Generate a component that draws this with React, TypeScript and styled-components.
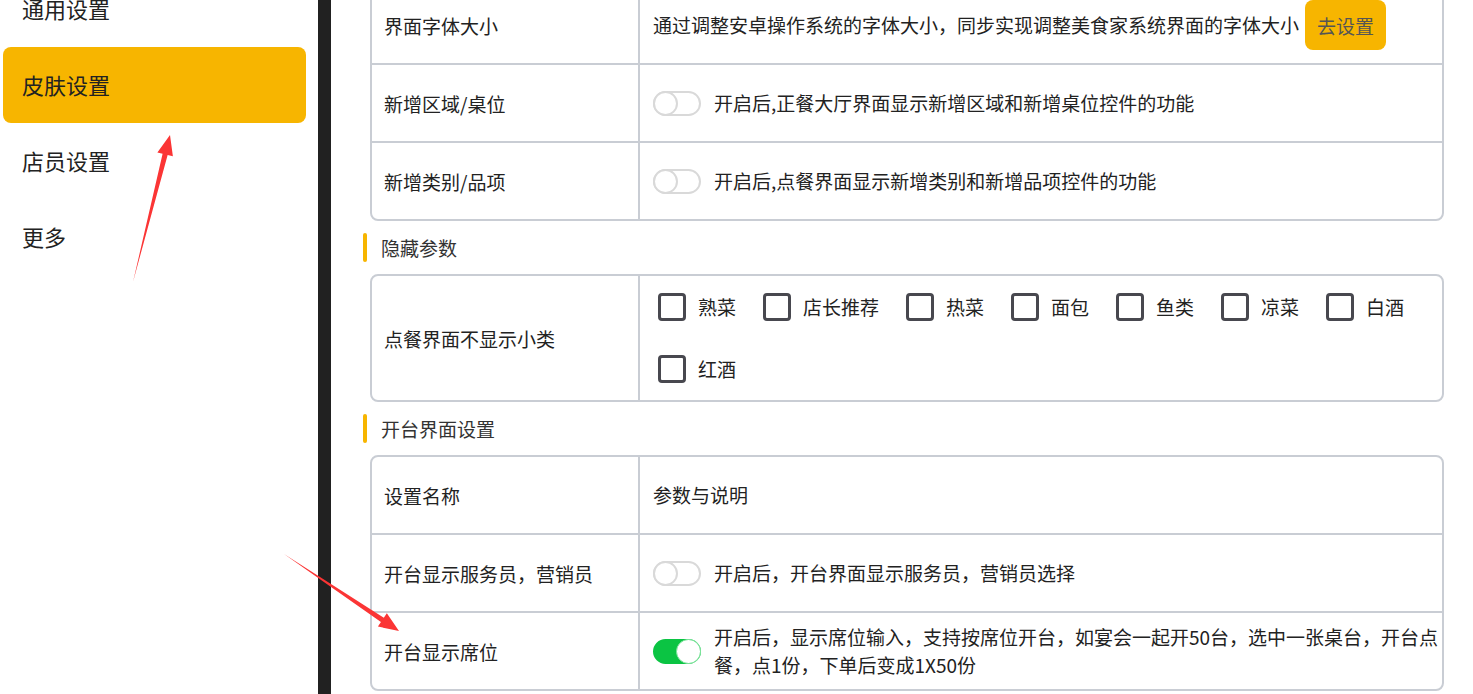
import React from 'react';
import styled, { createGlobalStyle } from 'styled-components';

const GlobalStyle = createGlobalStyle`
  html, body {
    margin: 0;
    padding: 0;
    height: 100%;
    overflow: hidden;
    background: #ffffff;
  }
  body {
    font-family: "Noto Sans CJK SC", "Noto Sans", sans-serif;
    color: #222222;
  }
`;

const Page = styled.div`
  display: flex;
  height: 100vh;
  overflow: hidden;
  background: #ffffff;
`;

const Sidebar = styled.nav`
  width: 318px;
  flex-shrink: 0;
  box-sizing: border-box;
  padding: 0 12px 0 3px;
  margin-top: -29px;
  display: flex;
  flex-direction: column;
`;

const NavItem = styled.div<{ active?: boolean }>`
  height: 76px;
  display: flex;
  align-items: center;
  padding: 0 0 3px 19px;
  box-sizing: border-box;
  font-size: 22px;
  color: #222222;
  border-radius: 8px;
  background: ${p => (p.active ? '#f7b500' : 'transparent')};
`;

const Divider = styled.div`
  width: 13px;
  flex-shrink: 0;
  background: #212121;
`;

const Content = styled.main`
  flex: 1;
  box-sizing: border-box;
  padding: 0 29px 0 32px;
  margin-top: -15px;
  display: flex;
  flex-direction: column;
`;

const Card = styled.div`
  margin-left: 7px;
  border: 2px solid #c9cdd4;
  border-radius: 8px;
  overflow: hidden;
`;

const Row = styled.div`
  display: grid;
  grid-template-columns: 266px 1fr;
  min-height: 76px;
  & + & {
    border-top: 2px solid #c9cdd4;
  }
`;

const NameCell = styled.div`
  display: flex;
  align-items: center;
  padding-left: 12px;
  font-size: 19px;
  color: #222222;
`;

const ValueCell = styled.div`
  display: flex;
  align-items: center;
  gap: 13px;
  padding: 0 0 0 13px;
  border-left: 2px solid #c9cdd4;
  font-size: 19px;
  color: #222222;
  line-height: 28px;
`;

const GoButton = styled.button`
  height: 50px;
  padding: 0 12px;
  margin-left: -7px;
  border: none;
  border-radius: 8px;
  background: #f7b500;
  color: #555555;
  font-family: inherit;
  font-size: 19px;
  cursor: pointer;
`;

const Toggle = styled.span<{ on?: boolean }>`
  position: relative;
  flex-shrink: 0;
  width: 48px;
  height: 25px;
  box-sizing: border-box;
  border-radius: 13px;
  border: 2px solid ${p => (p.on ? '#0bc443' : '#d9d9d9')};
  background: ${p => (p.on ? '#0bc443' : '#ffffff')};

  &::after {
    content: '';
    position: absolute;
    top: -2px;
    ${p => (p.on ? 'right: -2px;' : 'left: -2px;')}
    width: 25px;
    height: 25px;
    box-sizing: border-box;
    border-radius: 50%;
    background: #ffffff;
    border: ${p => (p.on ? '1px solid #7be39a' : '2px solid #d9d9d9')};
  }
`;

const SectionTitle = styled.div`
  display: flex;
  align-items: center;
  height: 29px;
  margin: 12px 0;
  font-size: 19px;
  color: #333333;

  &::before {
    content: '';
    width: 4px;
    height: 29px;
    border-radius: 2px;
    background: #f7b500;
    margin-right: 14px;
  }
`;

const CheckGrid = styled.div`
  display: flex;
  flex-wrap: wrap;
  row-gap: 34px;
  column-gap: 27px;
  padding: 17px 0 17px 5px;
`;

const CheckItem = styled.label`
  display: flex;
  align-items: center;
  gap: 12px;
  font-size: 19px;
  color: #222222;
  height: 28px;
`;

const Box = styled.span`
  width: 28px;
  height: 28px;
  box-sizing: border-box;
  border: 3px solid #48484f;
  border-radius: 4px;
`;

const Overlay = styled.svg`
  position: fixed;
  left: 0;
  top: 0;
  width: 1473px;
  height: 694px;
  pointer-events: none;
`;

const arrowPoints = (x1: number, y1: number, x2: number, y2: number) => {
  const dx = x2 - x1;
  const dy = y2 - y1;
  const len = Math.hypot(dx, dy);
  const ux = dx / len;
  const uy = dy / len;
  const nx = -uy;
  const ny = ux;
  const head = 20;
  const bx = x2 - ux * head;
  const by = y2 - uy * head;
  const shaft = 2.6;
  const wing = 8;
  const pts = [
    [x1, y1],
    [bx + nx * shaft, by + ny * shaft],
    [bx + nx * wing, by + ny * wing],
    [x2, y2],
    [bx - nx * wing, by - ny * wing],
    [bx - nx * shaft, by - ny * shaft],
  ];
  return pts.map(p => p.join(',')).join(' ');
};

const hiddenCats = ['熟菜', '店长推荐', '热菜', '面包', '鱼类', '凉菜', '白酒', '红酒'];

export default function App() {
  return (
    <>
      <GlobalStyle />
      <Page>
        <Sidebar>
          <NavItem>通用设置</NavItem>
          <NavItem active>皮肤设置</NavItem>
          <NavItem>店员设置</NavItem>
          <NavItem>更多</NavItem>
        </Sidebar>
        <Divider />
        <Content>
          <Card>
            <Row>
              <NameCell>界面字体大小</NameCell>
              <ValueCell>
                <span>通过调整安卓操作系统的字体大小，同步实现调整美食家系统界面的字体大小</span>
                <GoButton>去设置</GoButton>
              </ValueCell>
            </Row>
            <Row>
              <NameCell>新增区域/桌位</NameCell>
              <ValueCell>
                <Toggle />
                <span>开启后,正餐大厅界面显示新增区域和新增桌位控件的功能</span>
              </ValueCell>
            </Row>
            <Row>
              <NameCell>新增类别/品项</NameCell>
              <ValueCell>
                <Toggle />
                <span>开启后,点餐界面显示新增类别和新增品项控件的功能</span>
              </ValueCell>
            </Row>
          </Card>

          <SectionTitle>隐藏参数</SectionTitle>
          <Card>
            <Row>
              <NameCell>点餐界面不显示小类</NameCell>
              <ValueCell>
                <CheckGrid>
                  {hiddenCats.map(c => (
                    <CheckItem key={c}>
                      <Box />
                      {c}
                    </CheckItem>
                  ))}
                </CheckGrid>
              </ValueCell>
            </Row>
          </Card>

          <SectionTitle>开台界面设置</SectionTitle>
          <Card>
            <Row>
              <NameCell>设置名称</NameCell>
              <ValueCell>参数与说明</ValueCell>
            </Row>
            <Row>
              <NameCell>开台显示服务员，营销员</NameCell>
              <ValueCell>
                <Toggle />
                <span>开启后，开台界面显示服务员，营销员选择</span>
              </ValueCell>
            </Row>
            <Row>
              <NameCell>开台显示席位</NameCell>
              <ValueCell>
                <Toggle on />
                <span>开启后，显示席位输入，支持按席位开台，如宴会一起开50台，选中一张桌台，开台点餐，点1份，下单后变成1X50份</span>
              </ValueCell>
            </Row>
          </Card>
        </Content>
      </Page>
      <Overlay viewBox="0 0 1473 694">
        <polygon points={arrowPoints(133, 282, 170, 135)} fill="#fb3535" />
        <polygon points={arrowPoints(284, 554, 399, 631)} fill="#fb3535" />
      </Overlay>
    </>
  );
}
